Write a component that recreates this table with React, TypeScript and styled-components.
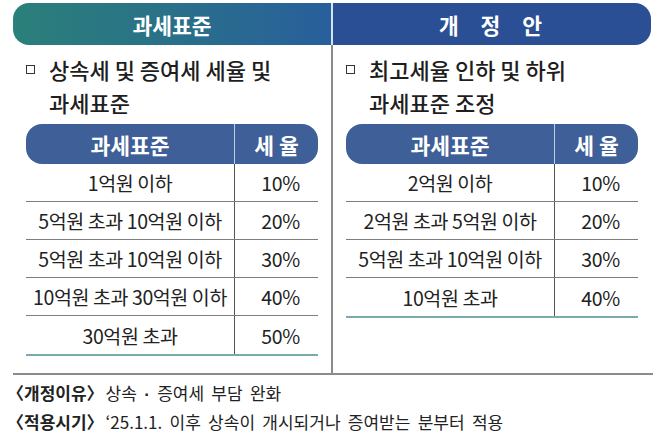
import React from "react"
import styled, { createGlobalStyle } from "styled-components"

const GlobalStyle = createGlobalStyle`
  html, body {
    margin: 0;
    padding: 0;
    background: #ffffff;
  }
  body {
    font-family: "Noto Sans CJK KR", "Noto Sans", sans-serif;
    color: #222;
  }
`

const Page = styled.div`
  width: 667px;
  height: 446px;
  padding: 3px 14px 0 13px;
  box-sizing: border-box;
  overflow: hidden;
`

const Columns = styled.div`
  display: grid;
  grid-template-columns: 318px 2px 318px;
  border-bottom: 2px solid #8c8c8c;
`

const Column = styled.div`
  display: flex;
  flex-direction: column;
`

const Divider = styled.div`
  display: flex;
  flex-direction: column;
  &::before {
    content: "";
    height: 42px;
    background: #d7e3ef;
  }
  &::after {
    content: "";
    flex: 1;
    background: #8a8a8a;
  }
`

const Header = styled.div<{ $side: "left" | "right" }>`
  height: 42px;
  display: flex;
  align-items: center;
  justify-content: center;
  color: #fff;
  font-size: 21.5px;
  font-weight: 700;
  background: ${(p) =>
    p.$side === "left"
      ? "linear-gradient(90deg, #2b807a 0%, #2a7386 40%, #285f9c 100%)"
      : "#2b4f94"};
  border-radius: ${(p) => (p.$side === "left" ? "16px 0 0 16px" : "0 16px 16px 0")};
`

const Spaced = styled.span`
  letter-spacing: 3px;
  word-spacing: 11px;
`

const Title = styled.div`
  display: flex;
  align-items: flex-start;
  gap: 14px;
  padding: 8px 0 0 13px;
  font-size: 22px;
  font-weight: 500;
  line-height: 33px;
  color: #1e1e1e;
`

const Marker = styled.span`
  flex: none;
  width: 7px;
  height: 7px;
  margin-top: 12px;
  border: 1.3px solid #333;
`

const Table = styled.div`
  margin: 5px 13px 17px 13px;
  border-bottom: 2px solid #7aa9ae;
`

const HeadRow = styled.div`
  display: grid;
  grid-template-columns: 209px 1fr;
  height: 40px;
  background: #3f5f98;
  border-radius: 16px;
  color: #fff;
  font-size: 21.5px;
  font-weight: 700;
`

const HeadCell = styled.div<{ $first?: boolean }>`
  display: flex;
  align-items: center;
  justify-content: center;
  border-right: ${(p) => (p.$first ? "1px solid #b9cde3" : "none")};
`

const Row = styled.div<{ $last?: boolean }>`
  display: grid;
  grid-template-columns: 209px 1fr;
  height: 38px;
  box-sizing: border-box;
  border-bottom: ${(p) => (p.$last ? "none" : "1px solid #7d7d7d")};
  font-size: 19.5px;
  font-weight: 400;
  color: #222;
`

const Cell = styled.div<{ $first?: boolean }>`
  display: flex;
  align-items: center;
  justify-content: center;
  border-right: ${(p) => (p.$first ? "1px solid #555" : "none")};
  letter-spacing: -0.4px;
  padding-left: ${(p) => (p.$first ? "0" : "8px")};
`

const Footer = styled.div`
  padding-top: 4px;
  font-size: 17px;
  line-height: 27px;
  color: #222;
  word-spacing: 3.5px;
`

const FootLine = styled.div`
  margin-left: -6px;
`

const Label = styled.span`
  font-weight: 700;
  word-spacing: 0;
  margin-right: 2px;
`

const Dot = styled.span`
  font-family: "Liberation Sans", sans-serif;
  font-weight: 700;
`

type Bracket = [string, string]

const current: Bracket[] = [
  ["1억원 이하", "10%"],
  ["5억원 초과 10억원 이하", "20%"],
  ["5억원 초과 10억원 이하", "30%"],
  ["10억원 초과 30억원 이하", "40%"],
  ["30억원 초과", "50%"],
]

const proposed: Bracket[] = [
  ["2억원 이하", "10%"],
  ["2억원 초과 5억원 이하", "20%"],
  ["5억원 초과 10억원 이하", "30%"],
  ["10억원 초과", "40%"],
]

function RateTable({ rows }: { rows: Bracket[] }) {
  return (
    <Table>
      <HeadRow>
        <HeadCell $first>과세표준</HeadCell>
        <HeadCell>세 율</HeadCell>
      </HeadRow>
      {rows.map(([base, rate], i) => (
        <Row key={i} $last={i === rows.length - 1}>
          <Cell $first>{base}</Cell>
          <Cell>{rate}</Cell>
        </Row>
      ))}
    </Table>
  )
}

export default function App() {
  return (
    <Page>
      <GlobalStyle />
      <Columns>
        <Column>
          <Header $side="left">과세표준</Header>
          <Title>
            <Marker />
            <span>
              상속세 및 증여세 세율 및
              <br />
              과세표준
            </span>
          </Title>
          <RateTable rows={current} />
        </Column>
        <Divider />
        <Column>
          <Header $side="right">
            <Spaced>개 정 안</Spaced>
          </Header>
          <Title>
            <Marker />
            <span>
              최고세율 인하 및 하위
              <br />
              과세표준 조정
            </span>
          </Title>
          <RateTable rows={proposed} />
        </Column>
      </Columns>
      <Footer>
        <FootLine>
          <Label>〈개정이유〉</Label>상속 <Dot>·</Dot> 증여세 부담 완화
        </FootLine>
        <FootLine>
          <Label>〈적용시기〉</Label>‘25.1.1. 이후 상속이 개시되거나 증여받는 분부터 적용
        </FootLine>
      </Footer>
    </Page>
  )
}
